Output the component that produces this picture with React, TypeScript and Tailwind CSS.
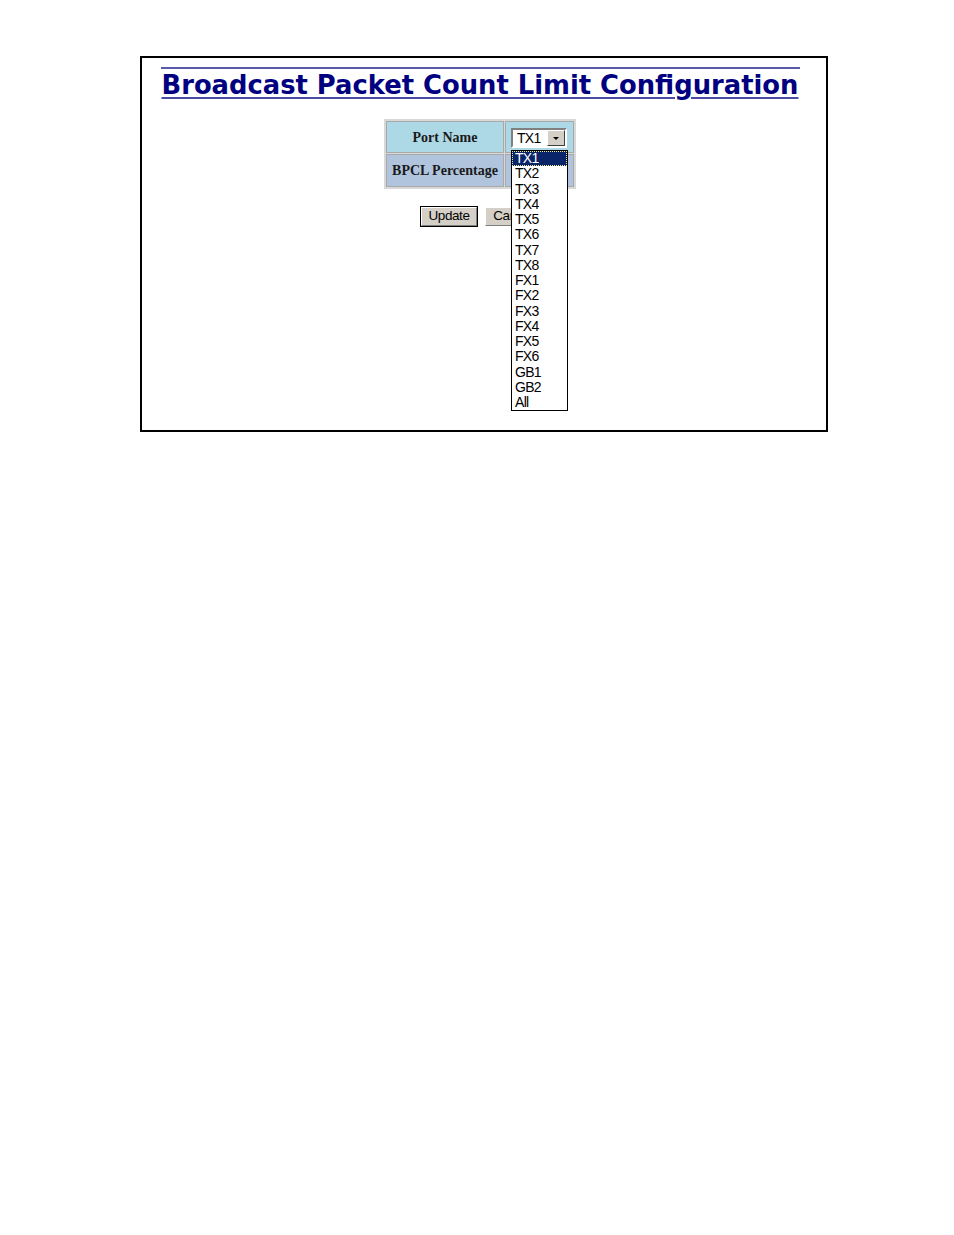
import React from 'react';

const ports = [
  'TX1', 'TX2', 'TX3', 'TX4', 'TX5', 'TX6', 'TX7', 'TX8',
  'FX1', 'FX2', 'FX3', 'FX4', 'FX5', 'FX6', 'GB1', 'GB2', 'All',
];

const sans = { fontFamily: '"Liberation Sans", Arial, sans-serif' };

const PortSelect: React.FC = () => (
  <div className="relative w-[56px] h-[20px]">
    {/* closed select box */}
    <div className="flex h-full w-full border-2 border-t-[#808080] border-l-[#808080] border-b-white border-r-white bg-white">
      <div className="flex-1 pl-[4px] text-[14px] leading-[16px] tracking-[-0.7px] text-black" style={sans}>
        TX1
      </div>
      <div className="flex w-[18px] items-center justify-center border border-t-white border-l-white border-b-[#404040] border-r-[#404040] bg-[#d4d0c8]">
        <div className="h-0 w-0 border-x-[3px] border-t-[3px] border-x-transparent border-t-black" />
      </div>
    </div>

    {/* open option list */}
    <div className="absolute left-0 top-[22px] z-10 w-[57px] border border-black bg-white">
      {ports.map((p, i) => (
        <div
          key={p}
          className={
            i === 0
              ? 'h-[15.25px] border border-dotted border-[#f0e68c] bg-[#0a246a] pl-[2px] text-[14px] leading-[13px] tracking-[-0.7px] text-white'
              : 'h-[15.25px] pl-[3px] text-[14px] leading-[15.25px] tracking-[-0.7px] text-black'
          }
          style={sans}
        >
          {p}
        </div>
      ))}
    </div>
  </div>
);

const FormButton: React.FC<{ label: string; primary?: boolean }> = ({ label, primary }) => (
  <div className={primary ? 'border border-black' : 'border border-transparent'}>
    <div
      className="flex h-[19px] w-[56px] items-center justify-center border border-t-white border-l-white border-b-[#808080] border-r-[#808080] bg-[#d4d0c8] text-[13.5px] tracking-[-0.4px] text-black"
      style={sans}
    >
      {label}
    </div>
  </div>
);

export default function App() {
  const serif = { fontFamily: '"Liberation Serif", "Times New Roman", serif' };

  return (
    <div className="h-[1235px] w-[954px] bg-white">
      <div className="pl-[140px] pt-[56px]">
        <div className="h-[376px] w-[688px] border-2 border-black">
          <div className="flex flex-col items-center pr-[8px] pt-[9px]">
            {/* heading */}
            <div className="w-[639px] border-t-2 border-[#5a5aaa]">
              <h1
                className="whitespace-nowrap pl-[1px] pt-[2px] text-[25.8px] font-bold leading-[29px] text-[#000080] underline decoration-[#4b4ba6] decoration-2 underline-offset-[3px]"
                style={{ fontFamily: '"DejaVu Sans", Verdana, sans-serif' }}
              >
                Broadcast Packet Count Limit Configuration
              </h1>
            </div>

            {/* settings table */}
            <div className="mt-[19px] border-2 border-[#d8d8d8]">
              <div className="grid grid-cols-[118px_69px] gap-[1px] bg-[#d8d8d8]">
                <div className="flex h-[32px] items-center justify-center border border-[#a9a9a9] bg-[#add8e6] text-[14px] font-bold text-[#1a1a1a]" style={serif}>
                  Port Name
                </div>
                <div className="h-[32px] border border-[#a9a9a9] bg-[#add8e6] pl-[5px] pt-[6px]">
                  <PortSelect />
                </div>
                <div className="flex h-[33px] items-center justify-center border border-[#a9a9a9] bg-[#b0c4de] text-[14px] font-bold text-[#1a1a1a]" style={serif}>
                  BPCL Percentage
                </div>
                <div className="h-[33px] border border-[#a9a9a9] bg-[#b0c4de]" />
              </div>
            </div>

            {/* actions */}
            <div className="mt-[17px] flex gap-[6px] pl-[2px]">
              <FormButton label="Update" primary />
              <FormButton label="Cancel" />
            </div>
          </div>
        </div>
      </div>
    </div>
  );
}
